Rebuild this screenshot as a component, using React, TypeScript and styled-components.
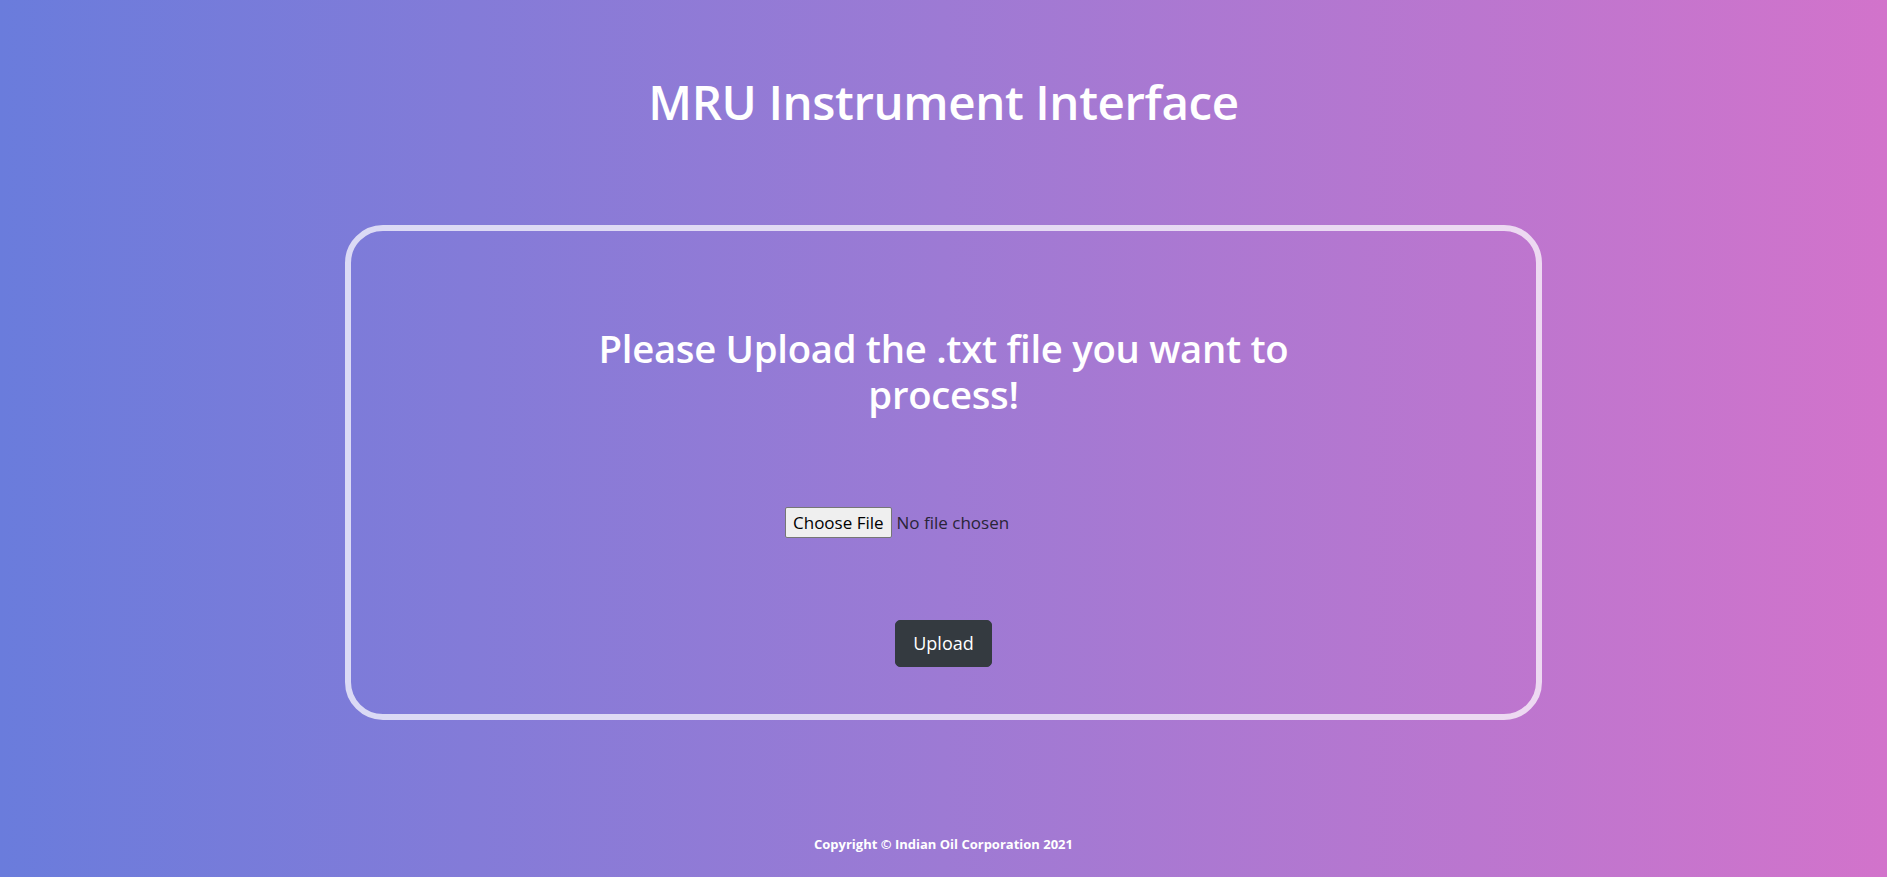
import React from "react";
import styled, { createGlobalStyle } from "styled-components";

const GlobalStyle = createGlobalStyle`
  html, body {
    margin: 0;
    padding: 0;
  }
  body {
    font-family: "Open Sans", "Noto Sans", sans-serif;
  }
  * {
    box-sizing: border-box;
  }
`;

export default function App() {
  return (
    <>
      <GlobalStyle />
      <Page>
        <Title>MRU Instrument Interface</Title>

        <Card>
          <Prompt>Please Upload the .txt file you want to process!</Prompt>
          <form onSubmit={(e) => e.preventDefault()}>
            <FileRow>
              <FileInput type="file" accept=".txt" />
            </FileRow>
            <ButtonRow>
              <UploadButton type="submit">Upload</UploadButton>
            </ButtonRow>
          </form>
        </Card>

        <Footer>Copyright © Indian Oil Corporation 2021</Footer>
      </Page>
    </>
  );
}

const Page = styled.div`
  min-height: 100vh;
  background: linear-gradient(to right, #6a7cdc, #9d7ad4 50%, #d273cb);
  display: flex;
  flex-direction: column;
  align-items: center;
  color: #fff;
  padding-top: 74px;
`;

const Title = styled.h1`
  margin: 0;
  font-size: 47.5px;
  line-height: 56px;
  font-weight: 600;
  letter-spacing: -0.4px;
`;

const Card = styled.div`
  margin-top: 95px;
  width: 1197px;
  height: 495px;
  border: 6px solid rgba(255, 255, 255, 0.72);
  border-radius: 38px;
  padding-top: 94px;
  display: flex;
  flex-direction: column;
  align-items: center;
`;

const Prompt = styled.h2`
  margin: 0;
  max-width: 740px;
  text-align: center;
  font-size: 38.3px;
  line-height: 46px;
  font-weight: 600;
  letter-spacing: -0.3px;
`;

const FileRow = styled.div`
  display: flex;
  justify-content: center;
  margin-top: 90px;
`;

const FileInput = styled.input`
  width: 317px;
  height: 31px;
  font-family: "Open Sans", "Noto Sans", sans-serif;
  font-size: 17px;
  color: #2a2438;

  &::file-selector-button {
    font-family: "Open Sans", "Noto Sans", sans-serif;
    font-size: 17px;
    color: #000;
    background: #efefef;
    border: 1px solid #767676;
    border-radius: 2px;
    height: 31px;
    padding: 0 7px;
    margin-right: 5px;
  }
`;

const ButtonRow = styled.div`
  display: flex;
  justify-content: center;
  margin-top: 82px;
`;

const UploadButton = styled.button`
  font-family: "Open Sans", "Noto Sans", sans-serif;
  font-size: 18px;
  line-height: 29px;
  padding: 8px 17px;
  color: #fff;
  background: #343a40;
  border: 1px solid #343a40;
  border-radius: 5px;
  cursor: pointer;
`;

const Footer = styled.footer`
  margin-top: 115px;
  font-size: 13px;
  line-height: 18px;
  font-weight: 700;
`;
